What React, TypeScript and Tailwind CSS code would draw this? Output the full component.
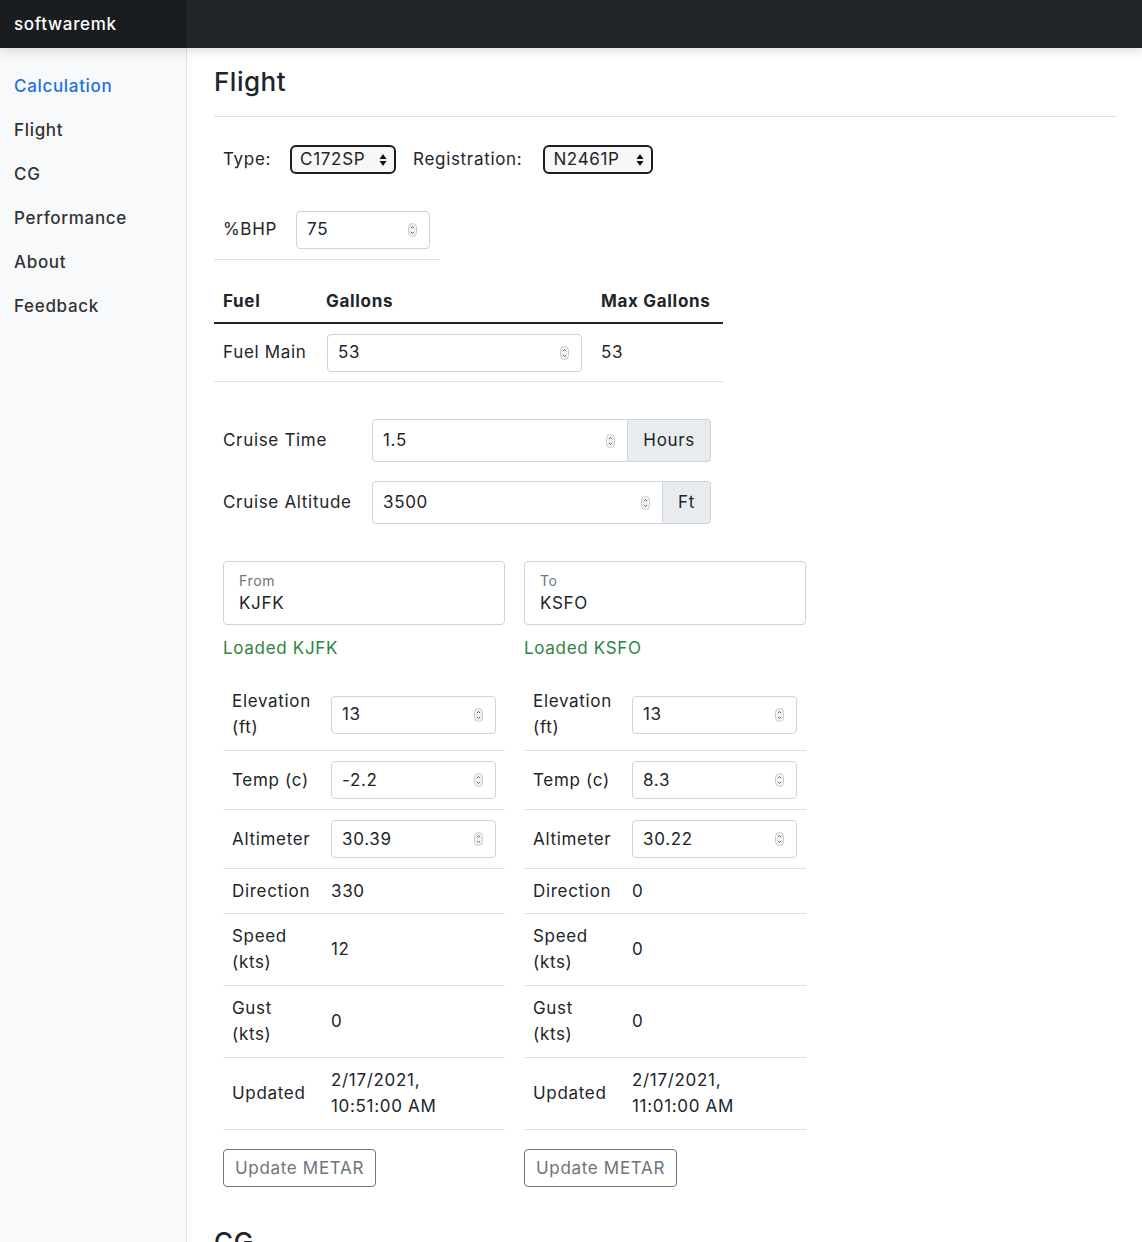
import React from 'react'

const Spinner = () => (
  <svg width="9" height="14" viewBox="0 0 9 14" className="shrink-0">
    <rect x="0.5" y="0.5" width="8" height="13" rx="4" fill="#f4f4f4" stroke="#c9c9c9" />
    <path d="M2.8 5.2 L4.5 3.5 L6.2 5.2" fill="none" stroke="#555" strokeWidth="0.9" />
    <path d="M2.8 8.8 L4.5 10.5 L6.2 8.8" fill="none" stroke="#555" strokeWidth="0.9" />
  </svg>
)

const SelectArrows = () => (
  <svg width="8" height="14" viewBox="0 0 8 14" className="shrink-0">
    <path d="M4 1 L7.5 6 L0.5 6 Z" fill="#111" />
    <path d="M4 13 L7.5 8 L0.5 8 Z" fill="#111" />
  </svg>
)

function NumInput({ value, className }: { value: string; className: string }) {
  return (
    <div className={`flex items-center justify-between h-[38px] border border-[#ced4da] rounded-[4px] bg-white pl-[10px] pr-[12px] ${className}`}>
      <span>{value}</span>
      <Spinner />
    </div>
  )
}

function FakeSelect({ value, className }: { value: string; className: string }) {
  return (
    <div className={`flex items-center justify-between h-[29px] border-2 border-[#1c1c1c] rounded-[6px] bg-[#f7f7f7] pl-[8px] pr-[7px] ${className}`}>
      <span>{value}</span>
      <SelectArrows />
    </div>
  )
}

type Row = { label: string[]; value?: string; lines?: string[]; input?: boolean }

function MetarColumn({ code, label, rows }: { code: string; label: string; rows: Row[] }) {
  return (
    <div className="w-[282px]">
      <div className="h-[64px] border border-[#ced4da] rounded-[4px] px-[15px] pt-[10px]">
        <div className="text-[14px] leading-[18px] text-[#6c757d]">{label}</div>
        <div className="leading-[24px] mt-[1px]">{code}</div>
      </div>
      <div className="mt-[11px] leading-[24px] text-[#2e8540]">Loaded {code}</div>
      <div className="mt-[19px]">
        {rows.map((r, i) => (
          <div
            key={i}
            className={`grid grid-cols-[99px_1fr] items-center border-b border-[#dee2e6] py-[10px] ${r.label.length > 1 || r.lines ? 'leading-[25.5px]' : 'leading-[24px]'}`}
          >
            <div className="pl-[9px]">
              {r.label.map((l) => (
                <div key={l}>{l}</div>
              ))}
            </div>
            <div className="pl-[9px] pr-[9px]">
              {r.input ? (
                <NumInput value={r.value ?? ''} className="w-full" />
              ) : r.lines ? (
                r.lines.map((l) => <div key={l}>{l}</div>)
              ) : (
                <span>{r.value}</span>
              )}
            </div>
          </div>
        ))}
      </div>
      <button className="mt-[19px] h-[38px] px-[11px] border border-[#6c757d] rounded-[4px] text-[#6c757d] leading-[24px] tracking-[0.04em]">
        Update METAR
      </button>
    </div>
  )
}

export default function App() {
  const nav = ['Calculation', 'Flight', 'CG', 'Performance', 'About', 'Feedback']

  const fromRows: Row[] = [
    { label: ['Elevation', '(ft)'], value: '13', input: true },
    { label: ['Temp (c)'], value: '-2.2', input: true },
    { label: ['Altimeter'], value: '30.39', input: true },
    { label: ['Direction'], value: '330' },
    { label: ['Speed', '(kts)'], value: '12' },
    { label: ['Gust', '(kts)'], value: '0' },
    { label: ['Updated'], lines: ['2/17/2021,', '10:51:00 AM'] },
  ]
  const toRows: Row[] = [
    { label: ['Elevation', '(ft)'], value: '13', input: true },
    { label: ['Temp (c)'], value: '8.3', input: true },
    { label: ['Altimeter'], value: '30.22', input: true },
    { label: ['Direction'], value: '0' },
    { label: ['Speed', '(kts)'], value: '0' },
    { label: ['Gust', '(kts)'], value: '0' },
    { label: ['Updated'], lines: ['2/17/2021,', '11:01:00 AM'] },
  ]

  return (
    <div className="min-h-screen bg-white text-[#212529] text-[17px] tracking-[0.04em] font-['Inter','Noto_Sans',sans-serif]">
      {/* Top navbar */}
      <header className="relative z-10 flex h-[48px] bg-[#212529] shadow-[0_4px_10px_rgba(0,0,0,0.12)]">
        <div className="flex items-center w-[186px] bg-[#1a1d20] px-[14px] pt-[1px] text-white text-[17px] font-medium shadow-[inset_-1px_0_0_rgba(0,0,0,0.25)]">
          softwaremk
        </div>
        <div className="flex-1" />
      </header>

      <div className="flex min-h-[1194px]">
        {/* Sidebar */}
        <aside className="w-[187px] shrink-0 bg-[#f8f9fa] border-r border-[#e3e4e6] pt-[17px]">
          {nav.map((n, i) => (
            <div
              key={n}
              className={`px-[14px] h-[44px] flex items-center font-medium ${i === 0 ? 'text-[#2470dc]' : 'text-[#333]'}`}
            >
              {n}
            </div>
          ))}
        </aside>

        {/* Main */}
        <main className="flex-1 pl-[27px] pr-[25px]">
          <div className="pt-[15px] pb-[15px] border-b border-[#dee2e6]">
            <h2 className="text-[26px] leading-[38px] font-medium tracking-[0.02em]">Flight</h2>
          </div>

          {/* Type / Registration */}
          <div className="mt-[28px] flex items-center h-[29px] pl-[9px]">
            <span>Type:</span>
            <FakeSelect value="C172SP" className="ml-[19px] w-[106px]" />
            <span className="ml-[17px]">Registration:</span>
            <FakeSelect value="N2461P" className="ml-[21px] w-[110px]" />
          </div>

          {/* %BHP */}
          <div className="mt-[27px] w-[226px] flex items-center border-b border-[#dee2e6] py-[10px] pl-[9px]">
            <span>%BHP</span>
            <NumInput value="75" className="ml-[19px] w-[134px]" />
          </div>

          {/* Fuel table */}
          <div className="mt-[22px] w-[509px]">
            <div className="grid grid-cols-[104px_274px_1fr] h-[42px] items-center font-bold border-b-2 border-[#212529]">
              <div className="pl-[9px]">Fuel</div>
              <div className="pl-[8px]">Gallons</div>
              <div className="pl-[9px]">Max Gallons</div>
            </div>
            <div className="grid grid-cols-[104px_274px_1fr] items-center border-b border-[#dee2e6] pt-[10px] pb-[9px]">
              <div className="pl-[9px]">Fuel Main</div>
              <div className="pl-[9px] pr-[10px]">
                <NumInput value="53" className="w-full" />
              </div>
              <div className="pl-[9px]">53</div>
            </div>
          </div>

          {/* Cruise */}
          <div className="mt-[37px] pl-[9px] w-[497px]">
            <div className="flex items-center">
              <span className="w-[149px]">Cruise Time</span>
              <div className="flex flex-1 h-[43px]">
                <div className="flex flex-1 items-center justify-between border border-[#ced4da] rounded-l-[4px] pl-[10px] pr-[12px]">
                  <span>1.5</span>
                  <Spinner />
                </div>
                <div className="flex items-center px-[15px] bg-[#e9ecef] border border-l-0 border-[#ced4da] rounded-r-[4px]">Hours</div>
              </div>
            </div>
            <div className="flex items-center mt-[19px]">
              <span className="w-[149px]">Cruise Altitude</span>
              <div className="flex flex-1 h-[43px]">
                <div className="flex flex-1 items-center justify-between border border-[#ced4da] rounded-l-[4px] pl-[10px] pr-[12px]">
                  <span>3500</span>
                  <Spinner />
                </div>
                <div className="flex items-center px-[15px] bg-[#e9ecef] border border-l-0 border-[#ced4da] rounded-r-[4px]">Ft</div>
              </div>
            </div>
          </div>

          {/* From / To */}
          <div className="mt-[37px] pl-[9px] flex gap-[19px]">
            <MetarColumn code="KJFK" label="From" rows={fromRows} />
            <MetarColumn code="KSFO" label="To" rows={toRows} />
          </div>

          <div className="mt-[36px] pb-[14px]">
            <h2 className="text-[26px] leading-[38px] font-medium">CG</h2>
          </div>
        </main>
      </div>
    </div>
  )
}
